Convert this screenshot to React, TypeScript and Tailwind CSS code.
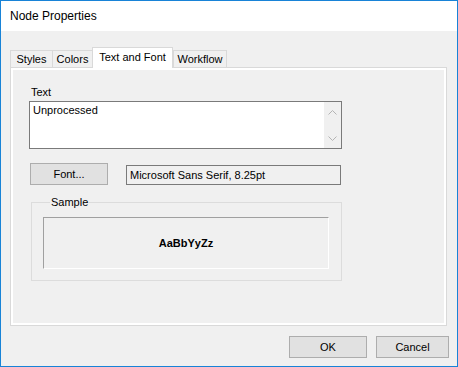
import React from 'react';

const TABS = [
  { label: 'Styles', w: 'w-[43px]' },
  { label: 'Colors', w: 'w-[41px]' },
  { label: 'Text and Font', w: 'w-[81px]', active: true },
  { label: 'Workflow', w: 'w-[54px]' },
];

function Chevron({ up }: { up?: boolean }) {
  return (
    <svg width="9" height="5" viewBox="0 0 9 5" className="block">
      <polyline
        points={up ? '0.5,4.5 4.5,0.5 8.5,4.5' : '0.5,0.5 4.5,4.5 8.5,0.5'}
        fill="none"
        stroke="#b4b4b4"
        strokeWidth="1"
      />
    </svg>
  );
}

function WinButton({ children, className }: { children: React.ReactNode; className: string }) {
  return (
    <button
      className={`h-[22px] bg-[#e1e1e1] border border-[#adadad] text-[11px] text-black leading-none ${className}`}
    >
      {children}
    </button>
  );
}

export default function App() {
  return (
    <div
      className="w-[458px] h-[367px] flex flex-col border border-[#1883d7] bg-[#f0f0f0] text-black"
      style={{ fontFamily: '"Liberation Sans", Arial, sans-serif' }}
    >
      {/* Title bar */}
      <div className="h-[30px] bg-white flex items-center pl-[9px] text-[12px] shrink-0">
        Node Properties
      </div>

      {/* Tabs + page */}
      <div className="pt-[16px] pl-[9px] pr-[10px] flex flex-col">
        <div className="flex items-end h-[20px]">
          {TABS.map((t) =>
            t.active ? (
              <div
                key={t.label}
                className={`${t.w} h-[21px] -mb-px relative z-10 bg-white border border-b-0 border-[#d9d9d9] flex items-center justify-center text-[11px] pb-[2px]`}
              >
                {t.label}
              </div>
            ) : (
              <div
                key={t.label}
                className={`${t.w} h-[18px] -mb-px bg-[#f0f0f0] border border-b-0 border-[#d9d9d9] -mr-px flex items-center justify-center text-[11px]`}
              >
                {t.label}
              </div>
            )
          )}
        </div>

        <div className="h-[259px] border border-[#d9d9d9]">
          <div className="h-full border-2 border-white bg-[#f0f0f0] pl-[16px] pt-[16px] flex flex-col items-start">
            <div className="text-[11px] leading-[13px] ml-[2px]">Text</div>
            <div className="mt-[2px] w-[313px] h-[48px] border border-[#7a7a7a] bg-white flex">
              <div className="flex-1 text-[11px] leading-[13px] pl-[3px] pt-[2px]">Unprocessed</div>
              <div className="w-[17px] bg-[#f0f0f0] flex flex-col items-center justify-between pt-[8px] pb-[7px]">
                <Chevron up />
                <Chevron />
              </div>
            </div>

            <div className="mt-[14px] flex items-end ml-px">
              <WinButton className="w-[78px]">Font...</WinButton>
              <div className="ml-[18px] w-[215px] h-[20px] border border-[#7a7a7a] bg-[#f0f0f0] text-[11px] flex items-center pl-[3px]">
                Microsoft Sans Serif, 8.25pt
              </div>
            </div>

            <fieldset className="mt-[11px] ml-[2px] w-[311px] border border-[#dcdcdc] pl-[11px] pr-[12px] pt-[8px] pb-[11px]">
              <legend className="text-[11px] leading-[13px] ml-[7px] px-[1px]">Sample</legend>
              <div className="h-[52px] border border-t-[#a0a0a0] border-l-[#a0a0a0] border-b-white border-r-white flex items-center justify-center text-[11px] font-bold">
                AaBbYyZz
              </div>
            </fieldset>
          </div>
        </div>
      </div>

      {/* Dialog buttons */}
      <div className="mt-[10px] flex justify-end pr-[8px] gap-[9px]">
        <WinButton className="w-[78px]">OK</WinButton>
        <WinButton className="w-[73px]">Cancel</WinButton>
      </div>
    </div>
  );
}
